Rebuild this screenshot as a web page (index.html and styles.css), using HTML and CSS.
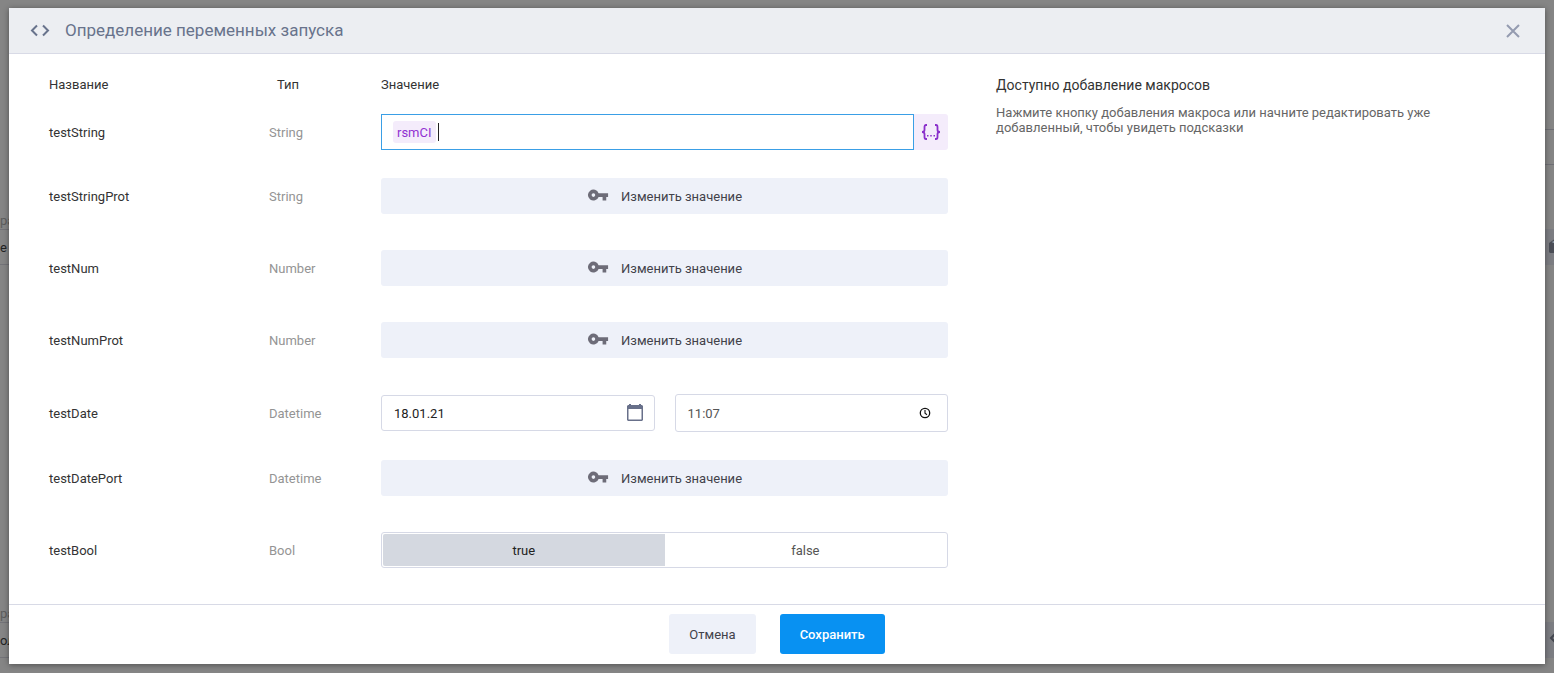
FILE: index.html
```html
<!DOCTYPE html>
<html lang="ru">
<head>
<meta charset="utf-8">
<meta name="viewport" content="width=device-width, initial-scale=1">
<title>Определение переменных запуска</title>
<link rel="stylesheet" href="styles.css">
</head>
<body>
<svg class="sprite" aria-hidden="true">
  <symbol id="key" viewBox="0 1 24 24"><path fill-rule="evenodd" d="M12.650 10A6 6 0 1 0 12.650 14H17v4h4v-4h2v-4H12.650zM7 14a2 2 0 1 1 0-4 2 2 0 0 1 0 4z"/></symbol>
</svg>

<div class="page" aria-hidden="true">
  <div class="page-left">
    <div class="page-field"><span class="page-label">ра</span><span class="page-value">е</span></div>
    <div class="page-field"><span class="page-label">ра</span><span class="page-value">ол</span></div>
  </div>
  <div class="page-right">
    <div class="page-row"></div>
    <div class="page-tool"><svg width="16" height="16" viewBox="0 0 16 16"><path d="M0 5l7-5h9v15H1l-1-1z" fill="#4b4e57"/><path d="M3 4l3-2v3H4z" fill="#8a96a3"/></svg></div>
    <div class="page-tool"><svg width="16" height="16" viewBox="0 0 16 16"><path d="M7 2L2 7l5 5" fill="none" stroke="#43464f" stroke-width="2"/></svg></div>
  </div>
</div>

<div class="overlay">
  <form class="modal" role="dialog" aria-labelledby="title">
    <header class="modal-header">
      <svg class="code-icon" width="20" height="14" viewBox="0 0 20 14"><path d="M7 1.500L2 6.500l5 5M13 1.500l5 5-5 5" fill="none" stroke="currentColor" stroke-width="2"/></svg>
      <h1 id="title" class="modal-title">Определение переменных запуска</h1>
      <button type="button" class="close" aria-label="Закрыть"><svg width="14" height="14" viewBox="0 0 14 14"><path d="M1 1l12 12M13 1L1 13" stroke="currentColor" stroke-width="2"/></svg></button>
    </header>

    <div class="modal-body">
      <table class="vars">
        <thead><tr><th class="col-name">Название</th><th class="col-type">Тип</th><th>Значение</th></tr></thead>
        <tbody>
          <tr class="tight">
            <td><label for="v1">testString</label></td><td class="type">String</td>
            <td><div class="macro-field">
              <div class="macro-box"><span class="chip">rsmCI</span><span class="caret"></span><input id="v1" class="bare" type="text"></div>
              <button type="button" class="macro-button" aria-label="Добавить макрос"><svg width="20" height="16" viewBox="0 0 20 16"><path d="M6 1H5Q3.500 1 3.500 3v3Q3.500 8 1 8q2.500 0 2.500 2v3q0 2 1.500 2h1M14 1h1q1.500 0 1.500 2v3q0 2 2.500 2-2.500 0-2.500 2v3q0 2-1.500 2h-1" fill="none" stroke="currentColor" stroke-width="1.800"/><path d="M6 11h1.500v1.500H6zM9.250 11h1.500v1.500h-1.500zM12.500 11H14v1.500h-1.500z" fill="currentColor"/></svg></button>
            </div></td>
          </tr>
          <tr><td>testStringProt</td><td class="type">String</td><td><button type="button" class="change"><svg class="key" width="22" height="22"><use href="#key"/></svg>Изменить значение</button></td></tr>
          <tr><td>testNum</td><td class="type">Number</td><td><button type="button" class="change"><svg class="key" width="22" height="22"><use href="#key"/></svg>Изменить значение</button></td></tr>
          <tr><td>testNumProt</td><td class="type">Number</td><td><button type="button" class="change"><svg class="key" width="22" height="22"><use href="#key"/></svg>Изменить значение</button></td></tr>
          <tr class="tight">
            <td><label for="v5">testDate</label></td><td class="type">Datetime</td>
            <td><div class="datetime">
              <div class="picker"><input id="v5" class="bare" type="text" value="18.01.21"><svg width="16" height="18" viewBox="0 0 16 18"><path fill-rule="evenodd" d="M2 0h2v1h8V0h2v1h1l1 1v14l-1 1H1l-1-1V2l1-1h1zM1.500 5v10.500h13V5z" fill="#68708a"/></svg></div>
              <div class="picker picker-time"><input class="bare" type="text" value="11:07" aria-label="Время testDate"><svg width="12" height="12" viewBox="0 0 12 12" fill="none" stroke="#111"><circle cx="6" cy="6" r="4.700" stroke-width="1.300"/><path d="M6 3v3.300l2 1.400" stroke-width="1.100"/></svg></div>
            </div></td>
          </tr>
          <tr><td>testDatePort</td><td class="type">Datetime</td><td><button type="button" class="change"><svg class="key" width="22" height="22"><use href="#key"/></svg>Изменить значение</button></td></tr>
          <tr>
            <td id="bool-name">testBool</td><td class="type">Bool</td>
            <td><div class="toggle" role="radiogroup" aria-labelledby="bool-name">
              <label class="option"><input type="radio" name="bool" checked>true</label>
              <label class="option"><input type="radio" name="bool">false</label>
            </div></td>
          </tr>
        </tbody>
      </table>

      <aside class="hint">
        <h2 class="hint-title">Доступно добавление макросов</h2>
        <p class="hint-text">Нажмите кнопку добавления макроса или начните редактировать уже добавленный, чтобы увидеть подсказки</p>
      </aside>
    </div>

    <footer class="modal-footer">
      <button type="button" class="btn">Отмена</button>
      <button type="submit" class="btn btn-primary">Сохранить</button>
    </footer>
  </form>
</div>
</body>
</html>
```
FILE: styles.css
```css
* { box-sizing: border-box; }

body {
  margin: 0;
  min-height: 100vh;
  position: relative;
  background: #858585;
  color: #333;
  font: 13px/17px Roboto, "Noto Sans", sans-serif;
}

button, input { font: inherit; color: inherit; }
button { border: 0; padding: 0; cursor: pointer; }

.sprite { display: none; }

/* Dimmed page behind the dialog */
.page {
  position: absolute;
  inset: 0;
  display: flex;
  justify-content: space-between;
  overflow: hidden;
}

.page-left { width: 16px; padding-top: 212px; }
.page-field { margin-bottom: 339px; }
.page-label, .page-value { display: block; border-bottom: 1px solid #737378; }
.page-label { height: 18px; color: #5d5d5d; }
.page-value { height: 35px; padding-top: 9px; color: #222; }
.page-field + .page-field { margin-top: 340px; }
.page-field { margin-bottom: 0; }

.page-right { width: 9px; padding-top: 129px; }
.page-row { height: 36px; margin-bottom: 64px; border: solid #6f6f75; border-width: 1px 0; }
.page-tool {
  height: 36px;
  margin-bottom: 357px;
  padding: 9px 0 0 4px;
  overflow: hidden;
  background: #7c7d82;
}

.overlay { position: relative; padding: 8px 9px 9px; }

.modal { background: #fff; box-shadow: 0 1px 6px rgba(0, 0, 0, .4); }

.modal-header {
  display: flex;
  align-items: center;
  height: 46px;
  padding: 0 24px 0 21px;
  border-bottom: 1px solid #d8dae6;
  background: #eceef2;
  color: #68738c;
}
.modal-title { flex: 1; margin: 0 0 0 15px; font-size: 17px; line-height: 19px; font-weight: 400; }
.close { display: flex; padding: 1px; background: none; color: #949bb0; }

.modal-body {
  display: grid;
  grid-template-columns: 53fr 30fr;
  gap: 48px;
  padding: 22px 40px 0;
}

.vars { width: 100%; border-spacing: 0; table-layout: fixed; align-self: start; }
.vars th { height: 38px; padding: 0; text-align: left; vertical-align: top; font-weight: 400; line-height: 18px; }
.vars .col-name { width: 220px; }
.vars .col-type { width: 112px; padding-left: 8px; }
.vars td { padding: 0 0 36px; }
.vars .tight td { padding-bottom: 28px; }
.vars .type { color: #949494; }

.change {
  display: flex;
  align-items: center;
  justify-content: center;
  gap: 12px;
  width: 100%;
  height: 36px;
  border-radius: 3px;
  background: #eef1f9;
  color: #42424a;
}
.key { fill: #6d6c78; }

.macro-field { display: flex; height: 36px; }
.macro-box { display: flex; flex: 1; align-items: center; padding: 0 11px; border: 1px solid #3a9fe6; }
.chip { padding: 3px 4px 2px; border-radius: 3px; background: #f4ecfb; color: #9132d2; }
.caret { width: 1px; height: 18px; margin-left: 2px; background: #222; }
.macro-button {
  display: flex;
  align-items: center;
  justify-content: center;
  width: 34px;
  border-radius: 0 3px 3px 0;
  background: #f4ecfb;
  color: #8a2fcb;
}

.bare { flex: 1; min-width: 0; height: 17px; padding: 0; border: 0; outline: 0; background: none; }

.datetime { display: grid; grid-template-columns: 1fr 1fr; align-items: center; gap: 20px; }
.picker {
  display: flex;
  align-items: center;
  height: 36px;
  padding: 0 11px 0 12px;
  border: 1px solid #d6d9e6;
  border-radius: 3px;
  color: #222;
}
.picker-time { height: 38px; padding-right: 16px; color: #555; }

.toggle { display: flex; height: 36px; padding: 1px; border: 1px solid #d6d9e6; border-radius: 3px; }
.option {
  display: flex;
  flex: 1;
  align-items: center;
  justify-content: center;
  border-radius: 2px 0 0 2px;
  color: #555;
}
.option:has(:checked) { background: #d4d8e0; color: #222; }
.option input { position: absolute; opacity: 0; }

.hint-title { margin: 0 0 11px; font-size: 14px; line-height: 18px; font-weight: 400; }
.hint-text { margin: 0; line-height: 15px; color: #666; }

.modal-footer {
  display: flex;
  justify-content: center;
  gap: 24px;
  padding: 9px 0 10px;
  border-top: 1px solid #d8dae6;
}
.btn { height: 40px; padding: 0 20px; border-radius: 3px; background: #eef1f9; color: #42424a; }
.btn-primary { background: #0891f2; color: #fff; font-weight: 500; }
```
